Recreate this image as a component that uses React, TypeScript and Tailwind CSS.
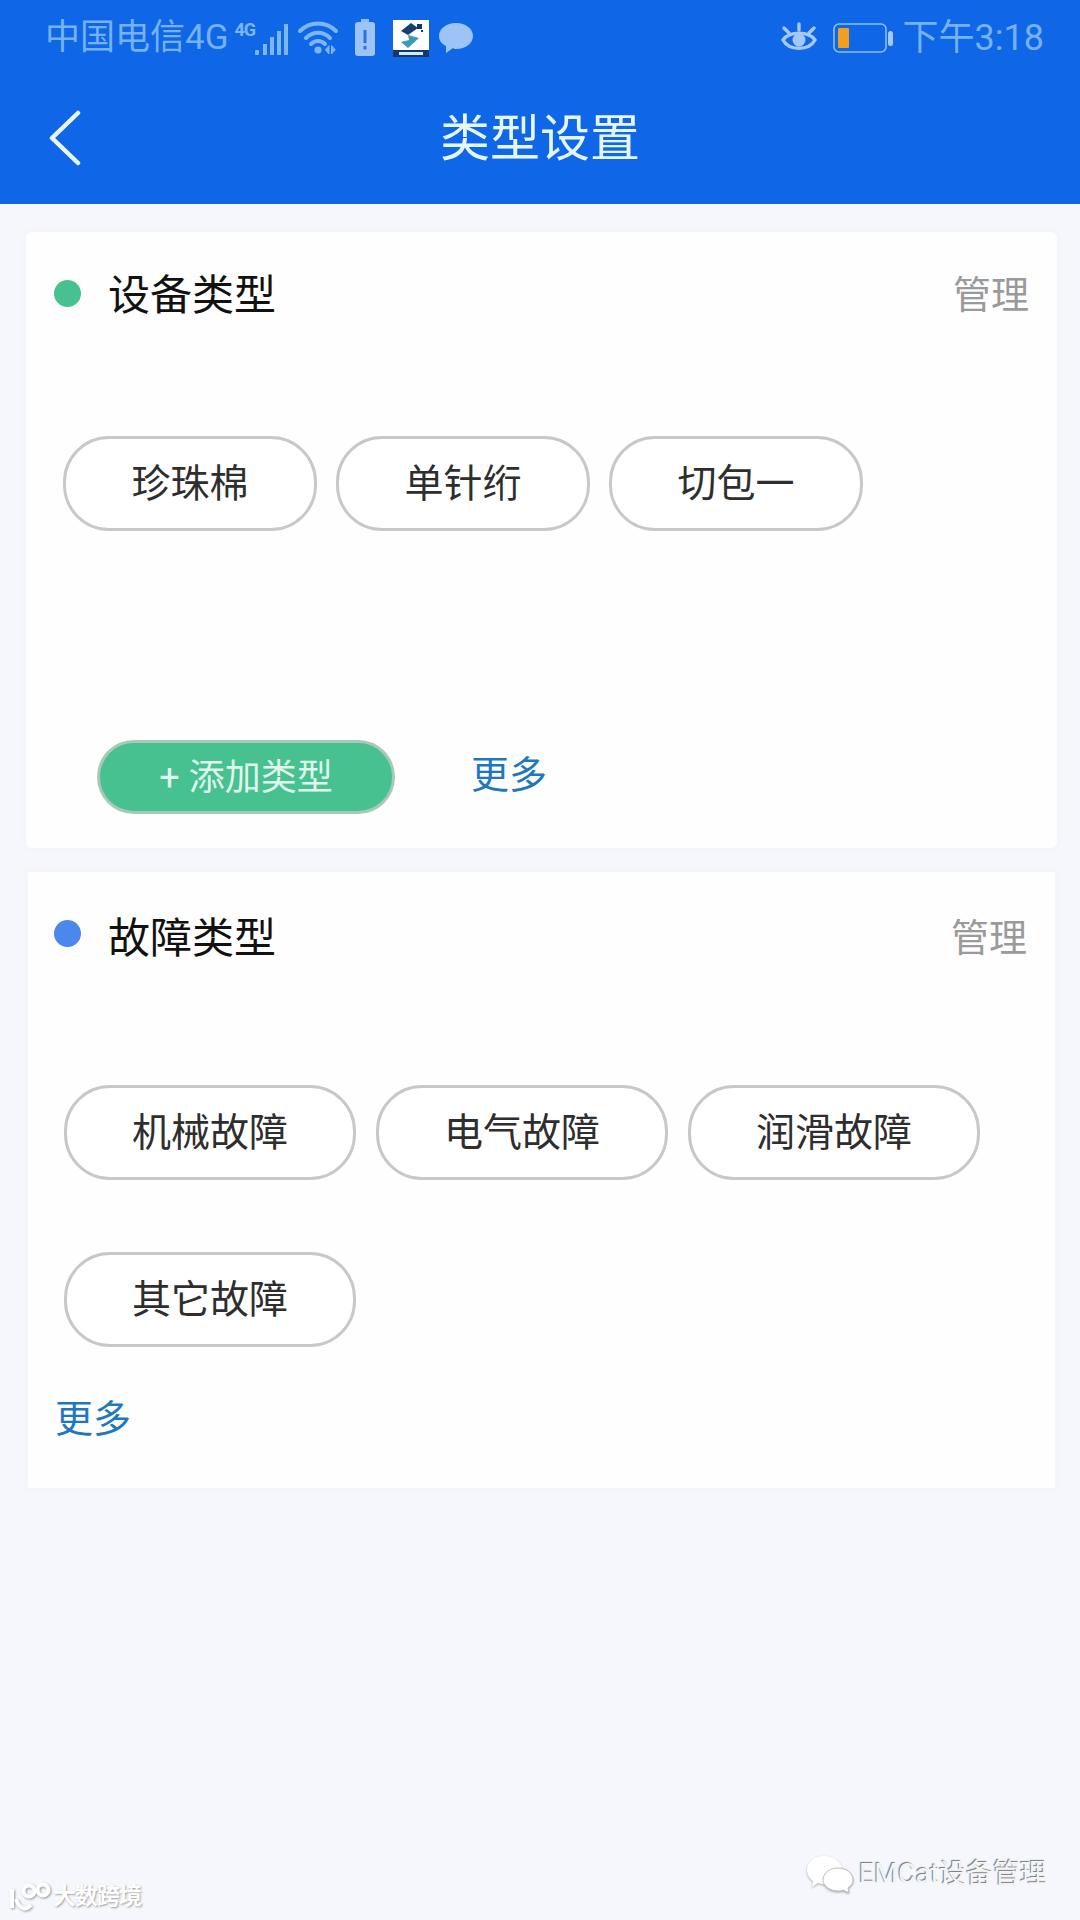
const cjk = "font-['Roboto','Noto_Sans_CJK_SC',sans-serif]";

const StatusIcons = () => (
  <div className="ml-[6px] flex items-center">
    <span className="mb-[16px] text-[18px] leading-none font-bold text-[#7db6f5] font-['Roboto',sans-serif] tracking-[-1px]">4G</span>
    <svg width="38" height="34" viewBox="0 0 38 34" className="ml-[-3px] mt-[4px]" fill="#7db6f5">
      <rect x="3" y="27" width="4" height="5" rx="1" />
      <rect x="11" y="21" width="4" height="11" />
      <rect x="18" y="14" width="4" height="18" />
      <rect x="25" y="8" width="4" height="24" />
      <rect x="32" y="1" width="4" height="31" />
    </svg>
    <svg width="40" height="36" viewBox="0 0 40 36" className="ml-[8px]" fill="none" stroke="#7db6f5" strokeWidth="4" strokeLinecap="round">
      <path d="M2 11C12 1 28 1 38 11" />
      <path d="M8 18C15 11 25 11 32 18" />
      <path d="M13 24C17 20 23 20 27 24" />
      <circle cx="20" cy="30" r="3.6" fill="#7db6f5" stroke="none" />
      <path d="M31 26L31 34L27.5 30ZM33.5 26L33.5 34L37 30Z" fill="#7db6f5" strokeWidth="1" />
    </svg>
    <svg width="22" height="38" viewBox="0 0 22 38" className="ml-[16px]">
      <rect x="7" y="0" width="8" height="3" fill="#8fbdf5" />
      <rect x="1" y="3" width="20" height="34" rx="3" fill="#9cc4f6" />
      <rect x="9.5" y="11" width="3" height="13" fill="#2c72da" />
      <rect x="9.5" y="27" width="3" height="3.5" fill="#2c72da" />
    </svg>
    <svg width="36" height="37" viewBox="0 0 36 37" className="ml-[17px]">
      <rect width="36" height="37" fill="#ffffff" />
      <rect y="30" width="36" height="7" fill="#12396f" />
      <path d="M18 3L25 8L15 15L8 11Z" fill="#17406f" />
      <path d="M15 15L26 18L15 28L8 22L16 20Z" fill="#3a9bb3" />
      <rect x="24" y="4" width="5" height="5" fill="#12396f" />
      <rect x="28" y="10" width="2" height="2" fill="#12396f" />
      <rect x="6" y="32" width="24" height="3" fill="#dbe6f3" />
    </svg>
    <svg width="36" height="32" viewBox="0 0 36 32" className="ml-[9px]" fill="#9cc4f6">
      <path d="M18 1C8 1 1 7 1 14C1 19 4 22 8 24L8 31L15 26C16 27 17 27 18 27C28 27 35 21 35 14C35 7 28 1 18 1Z" />
    </svg>
  </div>
);

const Eye = () => (
  <svg width="36" height="32" viewBox="0 0 36 32" fill="none" stroke="#a5c9f7" strokeWidth="3.4">
    <path d="M2 18C8 9 28 9 34 18C28 29 8 29 2 18Z" />
    <circle cx="18" cy="18" r="6.5" fill="#a5c9f7" stroke="none" />
    <path d="M3 6L8 11M33 6L28 11M18 2V8" strokeLinecap="round" />
  </svg>
);

const Battery = () => (
  <svg width="62" height="32" viewBox="0 0 62 32" className="ml-[16px]">
    <rect x="1" y="2" width="52" height="28" rx="5" fill="none" stroke="#8fbdf5" strokeWidth="1.6" />
    <rect x="5" y="6" width="11" height="20" rx="1" fill="#f0a020" />
    <rect x="55" y="9" width="5" height="15" rx="2.5" fill="#a5c9f7" />
  </svg>
);

const Chip = ({ label, wide }: { label: string; wide?: boolean }) => (
  <div className={`flex h-[95px] items-center justify-center rounded-[46px] border-[3px] border-[#c8c8c8] bg-white pt-[2px] text-[39px] text-[#2e2e2e] ${wide ? "w-[292px]" : "w-[254px]"}`}>
    {label}
  </div>
);

const CardHead = ({ title, dot, shift, inset, gap }: { title: string; dot: string; shift: string; inset: string; gap: string }) => (
  <div className="flex h-[122px] items-center justify-between pr-[28px]">
    <div className="flex items-center">
      <span className={`h-[27px] w-[27px] rounded-full ${inset} ${dot}`} />
      <h2 className={`text-[42px] leading-none font-normal text-[#111111] ${gap} ${shift}`}>{title}</h2>
    </div>
    <span className={`text-[38px] text-[#9a9a9a] ${shift}`}>管理</span>
  </div>
);

const App = () => {
  return (
    <div className={`relative min-h-[1920px] w-[1080px] overflow-hidden bg-[#f5f7fc] ${cjk}`}>
      <header className="h-[204px] bg-[#0f67e8]">
        <div className="flex h-[76px] items-center justify-between pl-[45px] pr-[36px]">
          <div className="flex items-center">
            <span className="text-[35px] text-[#75b2f5]">中国电信4G</span>
            <StatusIcons />
          </div>
          <div className="flex items-center">
            <Eye />
            <Battery />
            <span className="ml-[8px] text-[36px] text-[#75b2f5]">下午3:18</span>
          </div>
        </div>
        <div className="relative flex h-[128px] items-center justify-center">
          <svg width="34" height="56" viewBox="0 0 34 56" className="absolute left-[48px] top-[34px]" fill="none" stroke="#eaf6ff" strokeWidth="4.5" strokeLinecap="round" strokeLinejoin="round">
            <path d="M30 3L4 28L30 53" />
          </svg>
          <h1 className="mt-[-2px] text-[50px] leading-none font-normal text-[#e6f6ff]">类型设置</h1>
        </div>
      </header>

      <main className="flex flex-col">
        <section className="ml-[26px] mr-[23px] mt-[28px] h-[616px] rounded-[6px] bg-[#fefefe] shadow-[0_0_8px_#f0f2f8]">
          <CardHead title="设备类型" dot="bg-[#48c190]" shift="mt-[5px]" inset="ml-[28px]" gap="ml-[27px]" />
          <div className="ml-[37px] mt-[82px] flex gap-[19px]">
            <Chip label="珍珠棉" />
            <Chip label="单针绗" />
            <Chip label="切包一" />
          </div>
          <div className="ml-[71px] mt-[209px] flex items-center">
            <button className="flex h-[74px] w-[298px] items-center justify-center rounded-[37px] border-[3px] border-[#a6c9b8] bg-[#48c190] pt-[2px] text-[36px] text-[#dff7ec]">
              + 添加类型
            </button>
            <a className="ml-[76px] mt-[-5px] text-[38px] leading-[46px] text-[#1f78bd]">更多</a>
          </div>
        </section>

        <section className="ml-[28px] mr-[25px] mt-[24px] h-[616px] bg-[#fefefe] shadow-[0_0_8px_#f0f2f8]">
          <CardHead title="故障类型" dot="bg-[#4a88ee]" shift="mt-[11px]" inset="ml-[26px]" gap="ml-[27px]" />
          <div className="ml-[36px] mt-[91px] flex flex-wrap gap-x-[20px] gap-y-[72px]">
            <Chip label="机械故障" wide />
            <Chip label="电气故障" wide />
            <Chip label="润滑故障" wide />
            <Chip label="其它故障" wide />
          </div>
          <a className="ml-[27px] mt-[49px] block text-[38px] leading-[46px] text-[#1f78bd]">更多</a>
        </section>
      </main>

      {/* watermarks */}
      <div className="absolute bottom-[6px] left-[9px] flex items-center">
        <svg width="42" height="30" viewBox="0 0 42 30" fill="none" stroke="#ffffff" strokeWidth="4" className="[filter:drop-shadow(1px_1px_1px_#9a9a9a)]">
          <path d="M3 7V26M7 17C10 27 17 29 22 23" />
          <circle cx="20" cy="9" r="5.5" />
          <circle cx="34" cy="8" r="5.5" />
        </svg>
        <span className="ml-[2px] text-[23px] font-bold tracking-[-1px] text-white [text-shadow:1px_1px_2px_#a0a0a0]">大数跨境</span>
      </div>
      <div className="absolute bottom-[26px] left-[806px] flex items-center">
        <svg width="48" height="38" viewBox="0 0 48 38" className="[filter:drop-shadow(0_1px_1px_#a8a8a8)]" fill="#ffffff">
          <path d="M18 1C8 1 1 7 1 15C1 20 4 24 7 26L6 32L12 28C14 29 18 29 20 29C30 29 36 22 36 15C36 7 28 1 18 1Z" />
          <path d="M32 13C24 13 17 18 17 25C17 31 24 36 32 36C34 36 36 36 37 35L43 38L42 33C45 31 47 28 47 25C47 18 40 13 32 13Z" stroke="#bdbdbd" strokeWidth="1" />
        </svg>
        <span className="ml-[5px] text-[27px] text-[#f5f5f5] [text-shadow:-1px_-1px_1px_#777777]">EMCat设备管理</span>
      </div>
    </div>
  );
};

export default App;
